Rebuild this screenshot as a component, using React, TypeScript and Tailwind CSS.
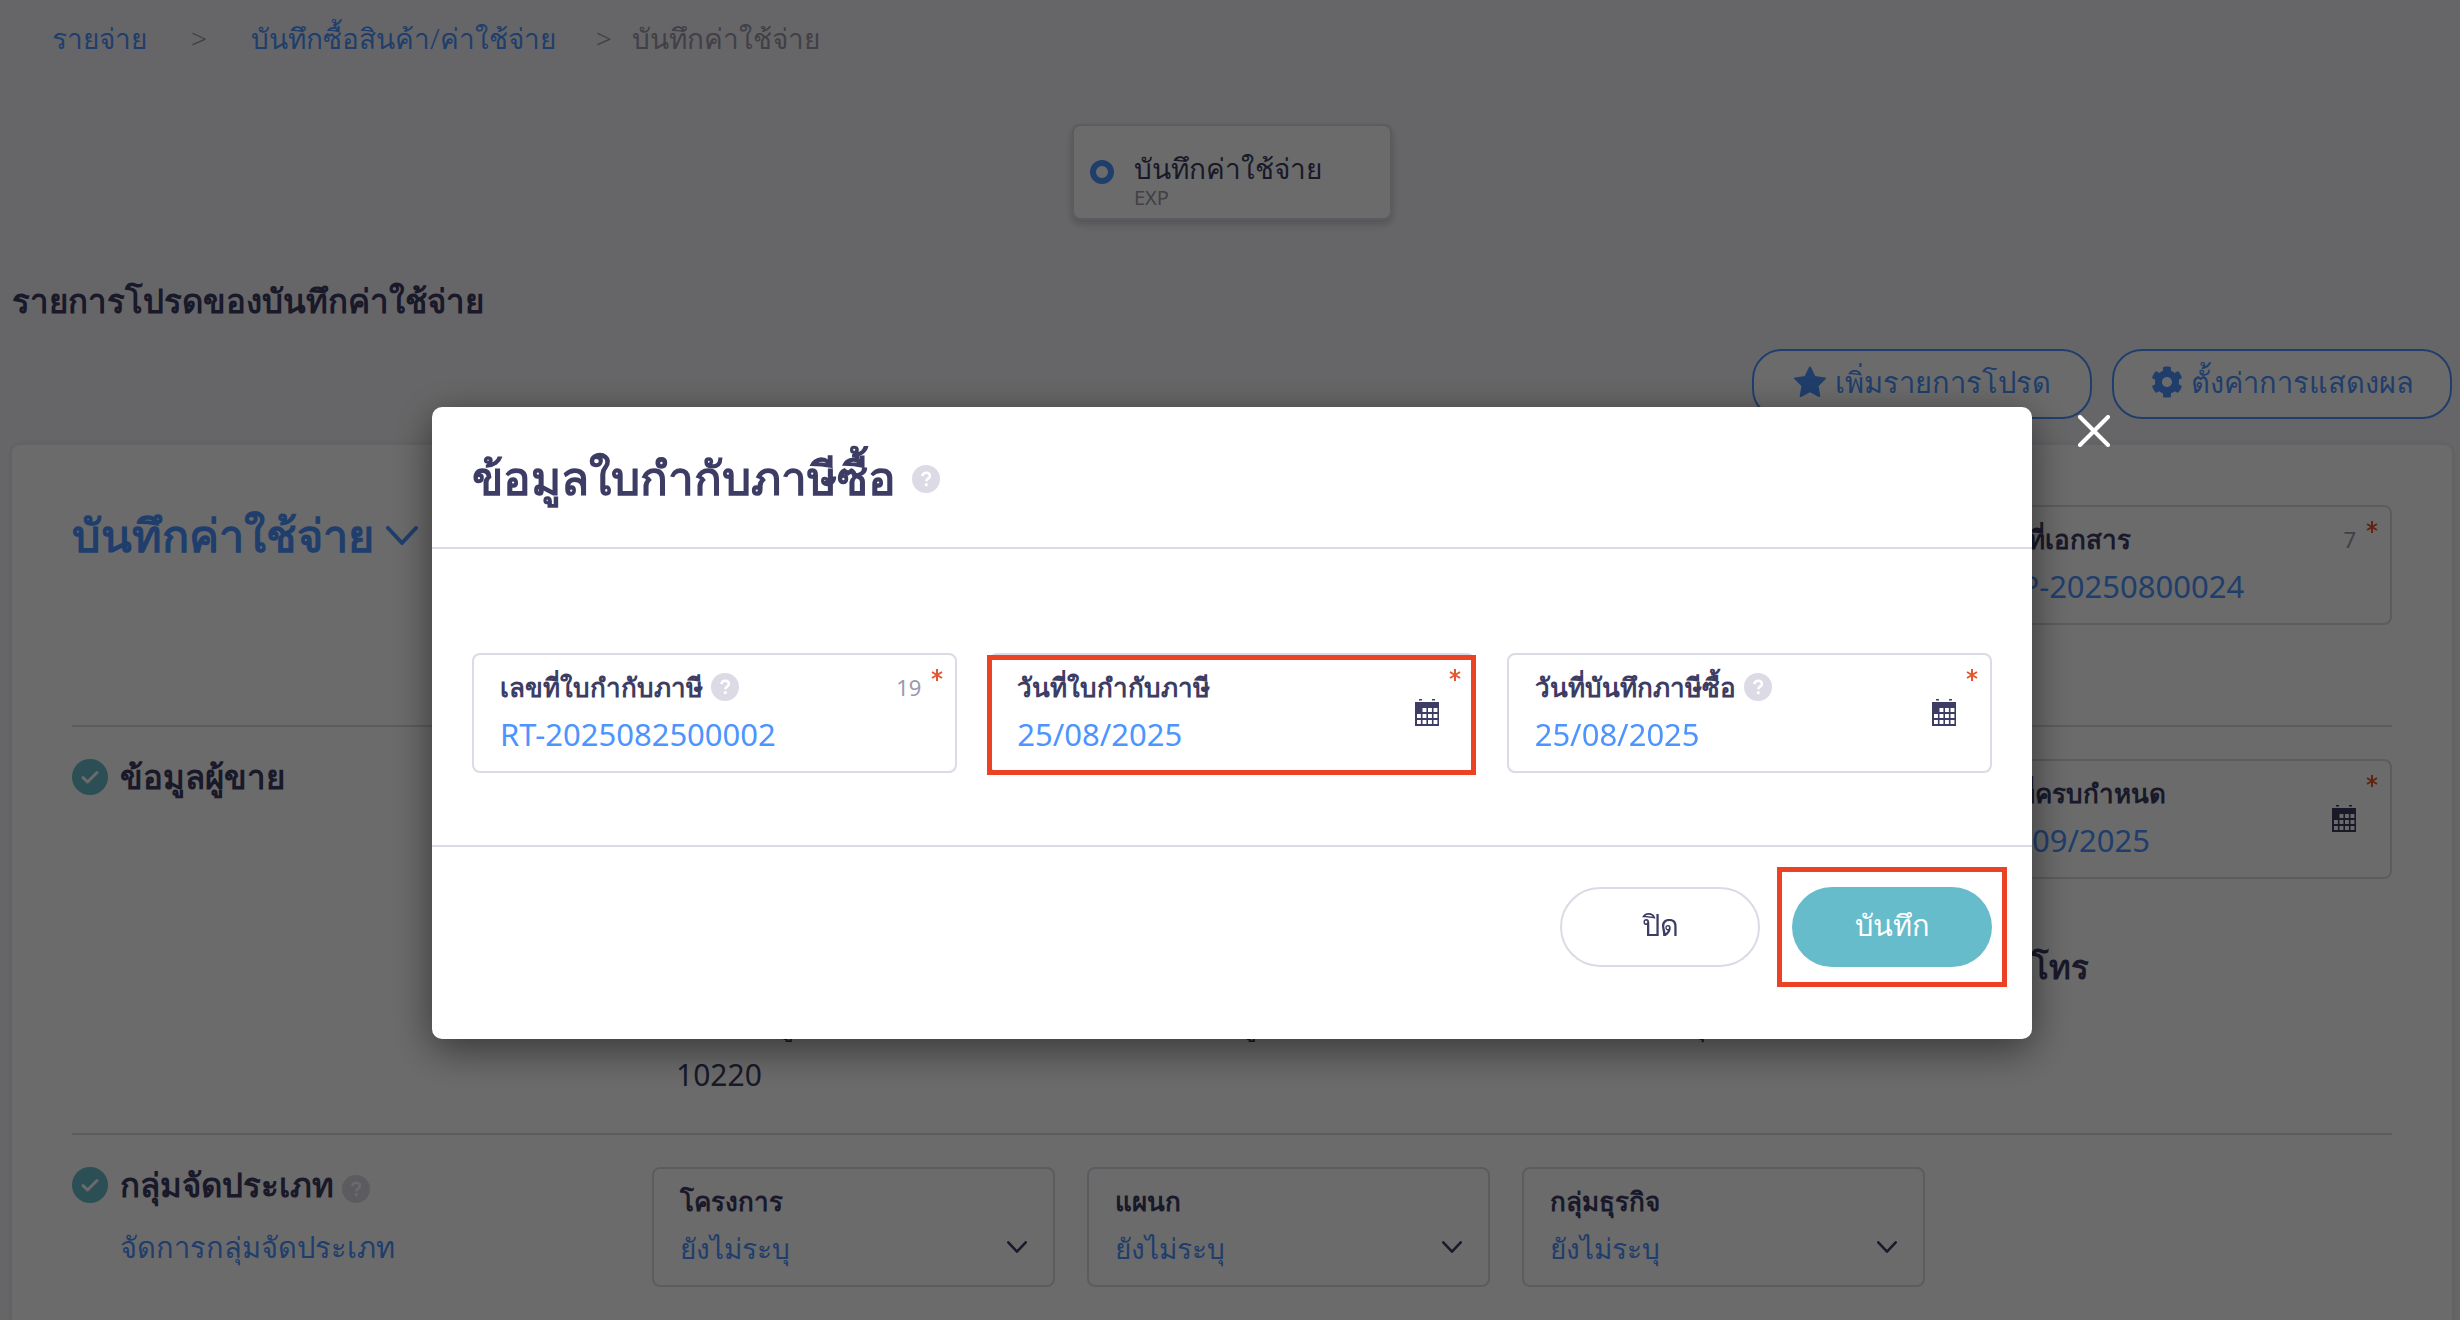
import { useState } from 'react'
import type { ReactNode } from 'react'
import clsx from 'clsx'

const DEPARTMENTS = [
  { id: 'project', label: 'โครงการ' },
  { id: 'department', label: 'แผนก' },
  { id: 'business', label: 'กลุ่มธุรกิจ' },
]

function HelpIcon() {
  return (
    <svg viewBox="0 0 28 28" className="size-7 shrink-0" aria-hidden="true">
      <circle cx="14" cy="14" r="14" fill="#dbdae5" />
      <path
        d="M10.400 11.200c.2-2.200 1.700-3.500 3.700-3.500 2.200 0 3.800 1.300 3.800 3.200 0 2.600-3.500 2.700-3.500 5.300"
        fill="none"
        stroke="#fff"
        strokeWidth="2.600"
      />
      <circle cx="14.300" cy="19.700" r="1.600" fill="#fff" />
    </svg>
  )
}

function CheckIcon() {
  return (
    <svg viewBox="0 0 36 36" className="size-9 shrink-0" aria-hidden="true">
      <circle cx="18" cy="18" r="18" fill="#66bcca" />
      <path d="M11 18.500l4.500 4.500L25 13.500" fill="none" stroke="#fff" strokeWidth="3" strokeLinecap="round" strokeLinejoin="round" />
    </svg>
  )
}

function CalendarIcon() {
  return (
    <svg viewBox="0 0 24 27" className="h-[27px] w-6" aria-hidden="true">
      <path d="M4 0h3v1.500H4zM17 0h3v1.500h-3zM0 3h24v24H0z" fill="#3c3c64" />
      <g fill="#fff">
        {[9, 15, 21].map((y, row) =>
          [2, 7.5, 13, 18.5].map((x, col) =>
            row === 0 && col === 0 ? null : <rect key={`${x}-${y}`} x={x} y={y} width="3.900" height="4" />
          )
        )}
      </g>
    </svg>
  )
}

function StarIcon() {
  return (
    <svg viewBox="0 0 34 32" className="h-8 w-[34px] shrink-0" aria-hidden="true">
      <path
        d="M17 1.500l4.600 9.400 10.400 1.500-7.500 7.300 1.800 10.300L17 25.100 7.700 30l1.800-10.300L2 12.400l10.400-1.500z"
        fill="#4d94ff"
        stroke="#4d94ff"
        strokeWidth="2"
        strokeLinejoin="round"
      />
    </svg>
  )
}

function GearIcon() {
  return (
    <svg viewBox="0 0 512 512" className="size-8 shrink-0" aria-hidden="true">
      <path
        fill="#4d94ff"
        d="M487.400 315.700l-42.600-24.600c4.300-23.200 4.300-47 0-70.200l42.600-24.600c4.900-2.800 7.100-8.600 5.500-14-11.100-35.600-30-67.800-54.700-94.600-3.800-4.100-10-5.100-14.800-2.300L380.800 110c-17.900-15.400-38.500-27.300-60.800-35.100V25.800c0-5.600-3.900-10.500-9.400-11.700-36.700-8.200-74.300-7.800-109.200 0-5.500 1.200-9.400 6.100-9.400 11.700V75c-22.200 7.900-42.800 19.800-60.800 35.100L88.700 85.500c-4.900-2.800-11-1.900-14.800 2.300-24.700 26.700-43.600 58.900-54.700 94.600-1.700 5.400.6 11.200 5.500 14L67.300 221c-4.300 23.200-4.300 47 0 70.200l-42.600 24.600c-4.900 2.800-7.100 8.600-5.500 14 11.100 35.600 30 67.800 54.700 94.600 3.800 4.100 10 5.100 14.800 2.300l42.600-24.600c17.900 15.400 38.500 27.300 60.800 35.100v49.200c0 5.600 3.900 10.500 9.400 11.700 36.700 8.200 74.300 7.800 109.200 0 5.500-1.200 9.400-6.100 9.400-11.700v-49.200c22.200-7.900 42.800-19.800 60.800-35.100l42.600 24.600c4.900 2.800 11 1.900 14.800-2.300 24.700-26.700 43.600-58.900 54.700-94.600 1.500-5.500-.7-11.300-5.600-14.100zM256 336c-44.100 0-80-35.900-80-80s35.900-80 80-80 80 35.900 80 80-35.900 80-80 80z"
      />
    </svg>
  )
}

function RequiredMark() {
  return (
    <svg viewBox="0 0 12 12" className="absolute top-3.5 right-3 size-3" aria-hidden="true">
      <path d="M6 0v12M1 3l10 6M11 3L1 9" stroke="#e2572f" strokeWidth="2" />
    </svg>
  )
}

function Chevron({ className }: { className: string }) {
  return (
    <svg viewBox="0 0 32 19" className={className} fill="none" stroke="currentColor" strokeWidth="4" strokeLinecap="round" strokeLinejoin="round" aria-hidden="true">
      <path d="M2 2l14 15L30 2" />
    </svg>
  )
}

interface FieldProps {
  id: string
  label: string
  defaultValue: string
  help?: boolean
  count?: number
  calendar?: boolean
  highlight?: boolean
}

function Field({ id, label, defaultValue, help, count, calendar, highlight }: FieldProps) {
  return (
    <div className="relative h-[120px] min-w-0 rounded-lg border-2 border-[#dbdae5] bg-white px-[26px] pt-4">
      <div className="flex h-8 items-center gap-2">
        <label htmlFor={id} className="text-[26px] leading-8 font-semibold whitespace-nowrap text-[#3c3c64]">
          {label}
        </label>
        {help && <HelpIcon />}
        {count && <span className="mr-2 ml-auto text-[22px] leading-8 text-[#9a9aae]">{count}</span>}
      </div>
      <input id={id} defaultValue={defaultValue} className="h-[62px] w-full bg-transparent text-[31px] text-[#4d94ff] outline-none" />
      <RequiredMark />
      {calendar && (
        <button type="button" aria-label="เลือกวันที่" className="absolute top-11 right-[34px]">
          <CalendarIcon />
        </button>
      )}
      {highlight && <div className="pointer-events-none absolute top-0 -right-[3px] -bottom-1 -left-1 border-5 border-[#ec4125]" />}
    </div>
  )
}

function SelectField({ id, label }: { id: string; label: string }) {
  return (
    <div className="relative h-[120px] rounded-lg border-2 border-[#dbdae5] px-[26px] pt-4">
      <label htmlFor={id} className="block text-[26px] leading-8 font-semibold text-[#3c3c64]">
        {label}
      </label>
      <select id={id} className="h-[62px] w-full appearance-none bg-transparent text-[28px] font-light text-[#4d94ff] outline-none">
        <option>ยังไม่ระบุ</option>
      </select>
      <Chevron className="pointer-events-none absolute right-[26px] bottom-8 h-3 w-5 text-[#3c3c64]" />
    </div>
  )
}

function SectionTitle({ children, help }: { children: ReactNode; help?: boolean }) {
  return (
    <div className="flex h-9 items-center">
      <CheckIcon />
      <h3 className="mr-2 ml-3 text-[33px] leading-9 font-semibold whitespace-nowrap text-[#3c3c64]">{children}</h3>
      {help && (
        <span className="pt-2">
          <HelpIcon />
        </span>
      )}
    </div>
  )
}

function OutlineButton({ children }: { children: ReactNode }) {
  return (
    <button type="button" className="flex h-[70px] w-[340px] items-center justify-center gap-2 rounded-[30px] border-2 border-[#4d94ff] bg-white pb-1 text-[29px] font-light whitespace-nowrap text-[#4d94ff]">
      {children}
    </button>
  )
}

function InvoiceModal({ onClose }: { onClose: () => void }) {
  return (
    <div className="fixed inset-0 flex items-start justify-center bg-black/58 pt-[407px] pl-1">
      <div role="dialog" aria-modal="true" aria-labelledby="modal-title" className="relative w-full max-w-[1600px] rounded-[10px] bg-white shadow-[0_10px_40px_rgba(0,0,0,0.5)]">
        <div className="flex h-[142px] items-center gap-4 border-b-2 border-[#dbdae5] px-10">
          <h2 id="modal-title" className="text-[46px] leading-[72px] font-semibold text-[#3c3c64]">ข้อมูลใบกำกับภาษีซื้อ</h2>
          <span className="pt-1">
            <HelpIcon />
          </span>
        </div>

        <div className="grid grid-cols-3 gap-8 border-b-2 border-[#dbdae5] px-10 pt-[104px] pb-[72px]">
          <Field id="tax-no" label="เลขที่ใบกำกับภาษี" defaultValue="RT-2025082500002" help count={19} />
          <Field id="tax-date" label="วันที่ใบกำกับภาษี" defaultValue="25/08/2025" calendar highlight />
          <Field id="record-date" label="วันที่บันทึกภาษีซื้อ" defaultValue="25/08/2025" help calendar />
        </div>

        <div className="flex justify-end gap-8 px-10 pt-10 pb-[72px]">
          <button type="button" onClick={onClose} className="h-20 w-[200px] rounded-full border-2 border-[#dbdae5] pb-1 text-[29px] font-light text-[#3c3c64]">
            ปิด
          </button>
          <div className="relative">
            <button type="button" className="h-20 w-[200px] rounded-full bg-[#66bcca] pb-1 text-[29px] font-light text-white">บันทึก</button>
            <div className="pointer-events-none absolute -inset-x-[15px] -inset-y-5 border-5 border-[#ec4125]" />
          </div>
        </div>

        <button type="button" aria-label="ปิดหน้าต่าง" onClick={onClose} className="absolute top-2 -right-[78px]">
          <svg viewBox="0 0 32 32" className="size-8" stroke="#fff" strokeWidth="4" strokeLinecap="round">
            <path d="M2 2l28 28M30 2L2 30" />
          </svg>
        </button>
      </div>
    </div>
  )
}

export default function App() {
  const [open, setOpen] = useState(true)

  return (
    <div className={clsx('min-h-screen bg-[#f4f4f8] font-["Noto_Sans",sans-serif]', open && 'h-screen overflow-hidden')}>
      {/* Breadcrumb */}
      <nav className="flex h-[76px] items-center px-[52px] text-[28px] font-light whitespace-nowrap text-[#9a9aa8]">
        <a href="#expenses" className="text-[#4d94ff]">รายจ่าย</a>
        <span className="mx-11">&gt;</span>
        <a href="#purchases" className="text-[#4d94ff]">บันทึกซื้อสินค้า/ค่าใช้จ่าย</a>
        <span className="mr-5 ml-10">&gt;</span>
        <span>บันทึกค่าใช้จ่าย</span>
      </nav>

      {/* Document step */}
      <div className="mt-12 flex justify-center pl-1">
        <div className="flex h-24 w-80 items-center gap-5 rounded-lg border-2 border-[#dbdae5] bg-white px-4 shadow-[0_4px_8px_rgba(0,0,0,0.2)]">
          <span className="size-6 rounded-full border-6 border-[#4d94ff]" />
          <div className="pt-3">
            <p className="text-[28px] leading-10 font-light text-[#3c3c64]">บันทึกค่าใช้จ่าย</p>
            <p className="text-xl leading-5 text-[#9a9aa8]">EXP</p>
          </div>
        </div>
      </div>

      <h1 className="mt-14 px-3 text-[33px] leading-[50px] font-semibold text-[#3c3c64]">รายการโปรดของบันทึกค่าใช้จ่าย</h1>

      <div className="mt-[23px] flex justify-end gap-5 px-2">
        <OutlineButton>
          <StarIcon />
          เพิ่มรายการโปรด
        </OutlineButton>
        <OutlineButton>
          <GearIcon />
          ตั้งค่าการแสดงผล
        </OutlineButton>
      </div>

      {/* Expense form */}
      <main className="mt-[26px] mr-2 ml-3 rounded-lg bg-white px-[60px] pt-[60px] pb-20 shadow-[0_0_8px_rgba(0,0,0,0.1)]">
        <div className="flex items-start justify-between border-b-2 border-[#dbdae5] pb-[100px]">
          <button type="button" className="flex h-15 items-center gap-3 text-[45px] font-semibold text-[#4d94ff]">
            บันทึกค่าใช้จ่าย
            <Chevron className="h-[19px] w-8" />
          </button>
          <div className="w-[435px]">
            <Field id="doc-no" label="เลขที่เอกสาร" defaultValue="EXP-20250800024" count={7} />
          </div>
        </div>

        <section className="grid h-[408px] grid-cols-[580px_1fr_435px] border-b-2 border-[#dbdae5] pt-8">
          <SectionTitle>ข้อมูลผู้ขาย</SectionTitle>
          <div className="flex flex-col justify-end pb-8 pl-6 text-[30px] leading-[52px] text-[#3c3c64]">
            <p>
              88/8, หมู่บ้านสายไหมวิลล์ ซอยสายไหม 8 หมู่ที่ 5, ถนนสายไหม, แขวงออเงิน, กรุงเทพมหานคร,
              <br />
              10220
            </p>
          </div>
          <div>
            <Field id="due-date" label="วันที่ครบกำหนด" defaultValue="24/09/2025" calendar />
            <h3 className="mt-16 pl-1 text-[33px] leading-12 font-semibold text-[#3c3c64]">เบอร์โทร</h3>
          </div>
        </section>

        <section className="grid grid-cols-[580px_1fr] pt-8">
          <div>
            <SectionTitle help>กลุ่มจัดประเภท</SectionTitle>
            <a href="#classification" className="ml-12 block pt-5 text-[29px] leading-12 font-light text-[#4d94ff]">จัดการกลุ่มจัดประเภท</a>
          </div>
          <div className="grid grid-cols-4 gap-8 pr-8">
            {DEPARTMENTS.map((item) => (
              <SelectField key={item.id} id={item.id} label={item.label} />
            ))}
          </div>
        </section>
      </main>

      {open && <InvoiceModal onClose={() => setOpen(false)} />}
    </div>
  )
}
